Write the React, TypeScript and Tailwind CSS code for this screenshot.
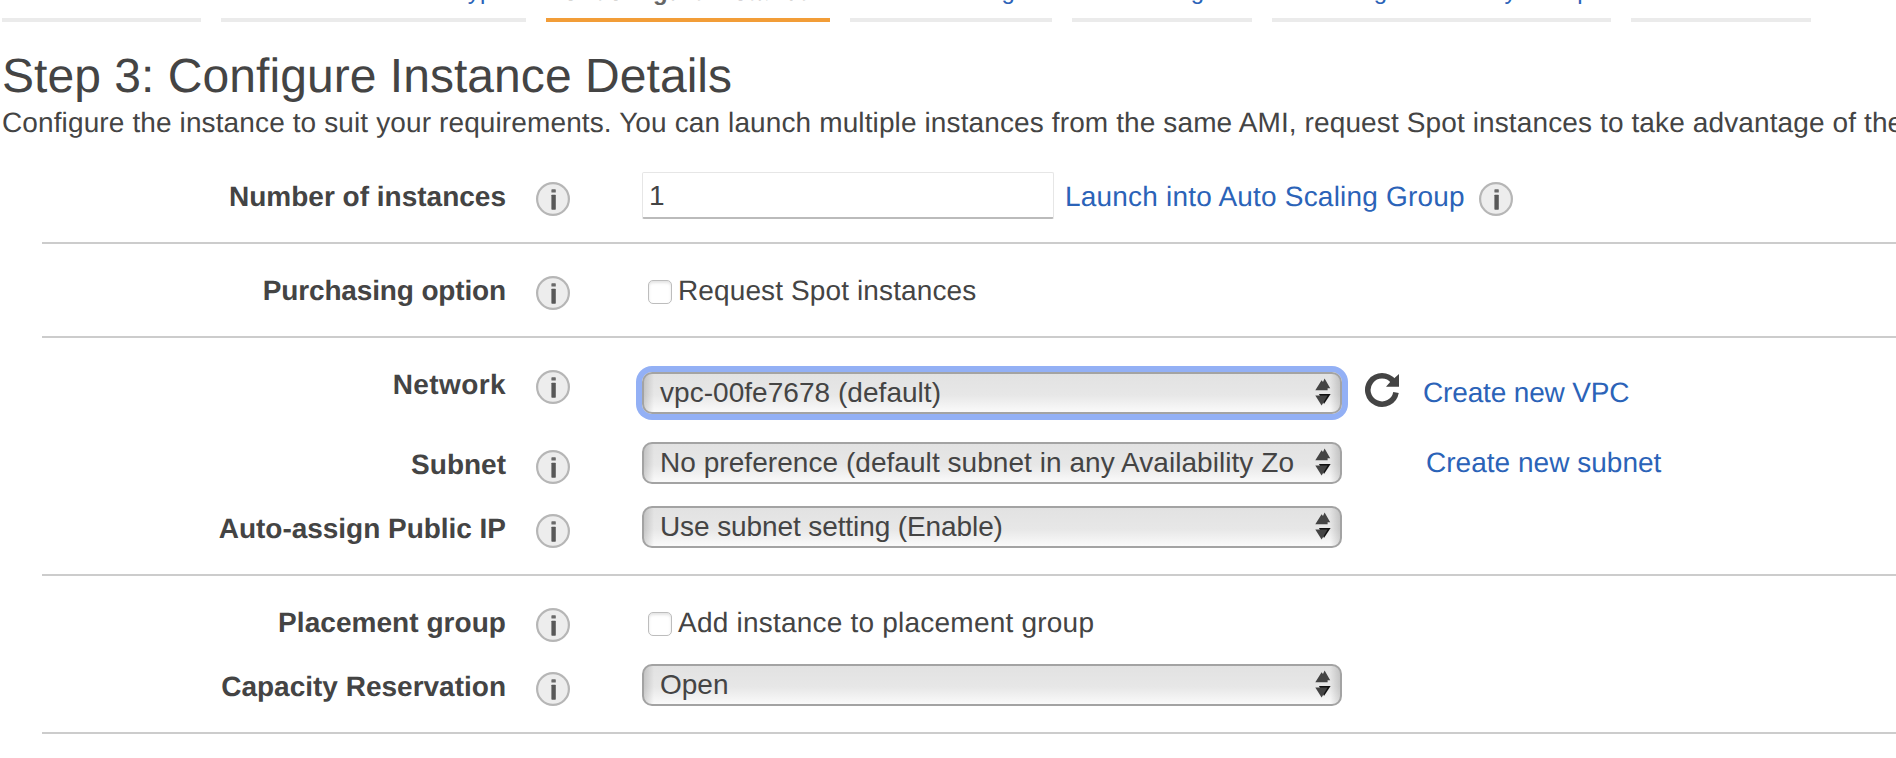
import type { ReactNode } from "react";

const tabs = [
  { label: "1. Choose AMI", width: "w-[199px]" },
  { label: "2. Choose Instance Type", width: "w-[305px]" },
  { label: "3. Configure Instance", width: "w-[284px]", active: true },
  { label: "4. Add Storage", width: "w-[202px]" },
  { label: "5. Add Tags", width: "w-[180px]" },
  { label: "6. Configure Security Group", width: "w-[339px]" },
  { label: "7. Review", width: "w-[180px]" },
];

function InfoIcon({ className = "" }: { className?: string }) {
  return (
    <svg viewBox="0 0 36 36" className={`size-9 shrink-0 ${className}`}>
      <circle cx="18" cy="18" r="15.9" fill="#ededed" stroke="#b6b6b6" strokeWidth="2.2" />
      <rect x="16.4" y="8.3" width="4.4" height="3.3" rx="0.6" fill="#6a6a6a" />
      <rect x="16.4" y="13.7" width="4.4" height="15" rx="0.6" fill="#585858" />
    </svg>
  );
}

function RefreshIcon() {
  return (
    <svg viewBox="0 0 36 36" className="size-9 shrink-0">
      <path d="M32 20.4A14.2 14.2 0 1 1 29.2 9.2" fill="none" stroke="#444" strokeWidth="5.6" />
      <path d="M35 2V14.8H22L27 9L30.5 6Z" fill="#444" />
    </svg>
  );
}

function Arrows() {
  return (
    <svg viewBox="0 0 16 28" className="h-7 w-4 shrink-0">
      <path d="M0.3 12.3L6.6 2.2L8 4L9.6 0.5L15.2 10.2H12.6V12.3Z" fill="#444" />
      <path d="M4 16H15.6L9 26Z" fill="#111" />
      <path d="M0.3 17.4H12.6L6.6 27.6Z" fill="#444" />
    </svg>
  );
}

function Select({ children, className = "" }: { children: ReactNode; className?: string }) {
  return (
    <button
      className={`flex h-[42px] w-[700px] shrink-0 items-start rounded-[10px] border-2 border-[#a3a3a3] bg-[linear-gradient(to_right,rgba(0,0,0,0.14),transparent_10px,transparent_calc(100%-10px),rgba(0,0,0,0.14)),linear-gradient(to_bottom,#e2e2e2,#e7e7e7_55%,#fafafa)] pl-4 pr-[9px] text-left ${className}`}
    >
      <span className="mt-[3px] flex-1 whitespace-nowrap">{children}</span>
      <span className="mt-[4px] flex">
        <Arrows />
      </span>
    </button>
  );
}

function Checkbox({ children, className = "" }: { children: ReactNode; className?: string }) {
  return (
    <label className="flex items-start">
      <input
        type="checkbox"
        className="ml-[6px] mt-[14px] size-6 appearance-none rounded-[5px] border border-[#bdbdbd] bg-white shadow-[inset_0_2px_3px_#e4e4e4]"
      />
      <span className={`ml-[6px] mt-[9px] ${className}`}>{children}</span>
    </label>
  );
}

function Row({
  label,
  height,
  labelClass = "tracking-normal",
  children,
}: {
  label: string;
  height: string;
  labelClass?: string;
  children: ReactNode;
}) {
  return (
    <div className={`flex items-start ${height}`}>
      <div className={`mt-[9px] w-[464px] shrink-0 text-right font-bold ${labelClass}`}>{label}</div>
      <InfoIcon className="ml-[29px] mt-[9px]" />
      <div className="ml-[71px] flex items-start whitespace-nowrap">{children}</div>
    </div>
  );
}

function Section({ children, first = false }: { children: ReactNode; first?: boolean }) {
  return (
    <section className={`border-b-2 border-[#ccc] ${first ? "pt-[26px]" : "pt-[22px]"}`}>{children}</section>
  );
}

function Link({ children, className = "" }: { children: ReactNode; className?: string }) {
  return (
    <a href="#" className={`text-[#2b63b8] ${className}`}>
      {children}
    </a>
  );
}

export default function App() {
  return (
    <div className="h-[758px] w-[1896px] overflow-hidden bg-white font-['Liberation_Sans',Arial,sans-serif] text-[28px] leading-8 tracking-[0.12px] text-[#444] [text-rendering:geometricPrecision]">
      <nav className="flex h-[22px] items-end gap-5 pl-[2px]">
        {tabs.map((t) => (
          <div
            key={t.label}
            className={`shrink-0 whitespace-nowrap border-b-4 pl-[18px] text-[24px] leading-7 ${t.width} ${
              t.active
                ? "border-[#f29d38] pb-[11px] font-bold text-[#666]"
                : "border-[#ebebeb] pb-[12px] text-[#2b63b8]"
            }`}
          >
            {t.label}
          </div>
        ))}
      </nav>
      <header className="h-[124px] whitespace-nowrap pl-[2px] pt-[27px]">
        <h1 className="text-[48px] leading-[56px] tracking-[0.05px]">Step 3: Configure Instance Details</h1>
        <p className="mt-[2px]">
          Configure the instance to suit your requirements. You can launch multiple instances from the same AMI, request
          Spot instances to take advantage of the lower pricing
        </p>
      </header>
      <main className="ml-[42px]">
        <Section first>
          <Row label="Number of instances" height="h-[70px]">
            <input
              defaultValue="1"
              className="h-[47px] w-[412px] rounded-[2px] border border-b-2 border-[#e6e6e6] border-b-[#bbb] pl-[6px] pt-px"
            />
            <Link className="ml-[11px] mt-[9px] tracking-[0.2px]">Launch into Auto Scaling Group</Link>
            <InfoIcon className="ml-[13px] mt-[9px]" />
          </Row>
        </Section>
        <Section>
          <Row label="Purchasing option" height="h-[70px]" labelClass="tracking-[-0.15px]">
            <Checkbox>Request Spot instances</Checkbox>
          </Row>
        </Section>
        <Section>
          <Row label="Network" height="h-20" labelClass="tracking-[0.4px]">
            <Select className="mt-3 tracking-[0.04px] ring-6 ring-[#93b0f5]">vpc-00fe7678 (default)</Select>
            <div className="ml-[22px] mt-3">
              <RefreshIcon />
            </div>
            <Link className="ml-[23px] mt-[17px] tracking-[-0.15px]">Create new VPC</Link>
          </Row>
          <Row label="Subnet" height="h-16">
            <Select className="mt-[2px] tracking-[0.05px]">No preference (default subnet in any Availability Zo</Select>
            <Link className="ml-[84px] mt-[7px] tracking-[0.02px]">Create new subnet</Link>
          </Row>
          <Row label="Auto-assign Public IP" height="h-[70px]" labelClass="tracking-[-0.03px]">
            <Select className="mt-[2px] tracking-[-0.1px]">Use subnet setting (Enable)</Select>
          </Row>
        </Section>
        <Section>
          <Row label="Placement group" height="h-16" labelClass="tracking-[0.05px]">
            <Checkbox className="tracking-[0.22px]">Add instance to placement group</Checkbox>
          </Row>
          <Row label="Capacity Reservation" height="h-[70px]">
            <Select className="mt-[2px] tracking-normal">Open</Select>
          </Row>
        </Section>
      </main>
    </div>
  );
}
